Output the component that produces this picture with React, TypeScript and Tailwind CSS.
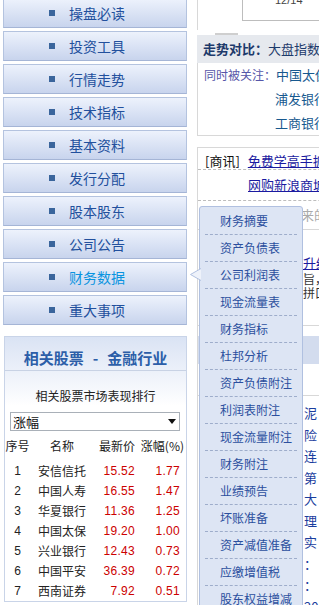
import React from "react";

const navItems = [
  "操盘必读",
  "投资工具",
  "行情走势",
  "技术指标",
  "基本资料",
  "发行分配",
  "股本股东",
  "公司公告",
  "财务数据",
  "重大事项",
];

const menuItems = [
  "财务摘要",
  "资产负债表",
  "公司利润表",
  "现金流量表",
  "财务指标",
  "杜邦分析",
  "资产负债附注",
  "利润表附注",
  "现金流量附注",
  "财务附注",
  "业绩预告",
  "坏账准备",
  "资产减值准备",
  "应缴增值税",
  "股东权益增减",
];

const stocks = [
  ["1", "安信信托", "15.52", "1.77"],
  ["2", "中国人寿", "16.55", "1.47"],
  ["3", "华夏银行", "11.36", "1.25"],
  ["4", "中国太保", "19.20", "1.00"],
  ["5", "兴业银行", "12.43", "0.73"],
  ["6", "中国平安", "36.39", "0.72"],
  ["7", "西南证券", "7.92", "0.51"],
];

const newsTail = ["泥", "险", "连", "第", "大", "理", "实", "：", "：", "201"];

const App = () => {
  return (
    <div className="relative w-[319px] h-[605px] overflow-hidden bg-white flex font-['Noto_Sans_CJK_SC',sans-serif]">
      {/* left column */}
      <div className="w-[184px] ml-[3px] shrink-0 flex flex-col -mt-[2px]">
        {/* nav buttons */}
        <div className="flex flex-col gap-[3px]">
          {navItems.map((label) => (
            <a
              key={label}
              href="#"
              className={`h-[30px] flex items-center border border-[#b4c3df] border-b-[#a5b5d6] bg-linear-to-b from-[#edf2fc] to-[#c8d4ed] pl-[45px] text-[14px] leading-none ${
                label === "财务数据" ? "text-[#0a94e0]" : "text-[#22509d]"
              }`}
            >
              <span className="w-[6px] h-[6px] bg-[#3a659c] mr-[14px]" />
              {label}
            </a>
          ))}
        </div>

        {/* related stocks */}
        <div className="mt-[11px] ml-[1px] w-[183px] border border-[#c9d4e8] bg-white">
          <div className="bg-linear-to-b from-[#dae3f4] to-white">
            <div className="h-[34px] border-b border-[#c8d2e4] pt-[11px] leading-[20px] text-center text-[15px] font-bold text-[#2c5ea8]">
              相关股票<span className="mx-[9px]">-</span>金融行业
            </div>
            <div className="pt-[15px] leading-[20px] text-center text-[12px] text-[#222]">
              相关股票市场表现排行
            </div>
          </div>
          <div className="mt-[6px] ml-[5px] w-[170px] h-[19px] border border-[#a9b0b8] flex items-center justify-between pl-[2px] pr-[3px] text-[13px] text-[#111]">
            <span>涨幅</span>
            <svg width="8" height="5" viewBox="0 0 8 5">
              <path d="M0 0h8L4 5z" fill="#111" />
            </svg>
          </div>

          <div className="mt-[5px] text-[12px] text-[#222]">
            <div className="h-[20px] flex items-center">
              <span className="w-[25px] text-center">序号</span>
              <span className="w-[64px] text-center">名称</span>
              <span className="w-[41px] text-right">最新价</span>
              <span className="w-[49px] text-right">涨幅(%)</span>
            </div>
            <div className="mt-[5px]">
              {stocks.map(([n, name, price, chg]) => (
                <div key={n} className="h-[20px] flex items-center">
                  <span className="w-[25px] text-center font-['Liberation_Sans',sans-serif]">{n}</span>
                  <span className="w-[64px] text-center">{name}</span>
                  <span className="w-[41px] text-right text-[#cc0000] font-['Liberation_Sans',sans-serif] tracking-[0.3px]">
                    {price}
                  </span>
                  <span className="w-[45px] text-right text-[#cc0000] font-['Liberation_Sans',sans-serif] tracking-[0.3px]">
                    {chg}
                  </span>
                </div>
              ))}
            </div>
          </div>
        </div>
      </div>

      {/* right column */}
      <div className="ml-[10px] w-[340px] shrink-0 text-[13px]">
        <div className="h-[30px] border-l border-[#d8d8d8] flex">
          <div className="ml-[44px] w-[200px] h-[29px] border-l border-b border-[#bdbdbd] pl-[32px] -mt-[8px] text-[11px] text-[#444] font-['Liberation_Sans',sans-serif]">
            12/14
          </div>
        </div>
        <div className="mt-[3px] ml-[18px] w-[23px] h-[2px] bg-[#cfcfcf]" />
        <div className="h-[28px] bg-[#e6e9ee] flex items-center pl-[6px] text-[#1d3a6b] whitespace-nowrap">
          <span className="font-bold">走势对比：</span>
          <span>大盘指数</span>
        </div>
        <div className="border-l border-b border-[#d8d8d8] pl-[6px] text-[12px] leading-[24px] h-[73px]">
          <div className="whitespace-nowrap">
            <span className="text-[#5656a8]">同时被关注：</span>
            <span className="text-[#17598f] text-[13px]">中国太保</span>
          </div>
          <div className="pl-[71px] text-[#17598f] text-[13px]">浦发银行</div>
          <div className="pl-[71px] text-[#17598f] text-[13px]">工商银行</div>
        </div>

        <div className="mt-[11px] border-l border-t border-[#d8d8d8]">
          <div className="h-[22px] pt-[4px] flex items-center border-b border-dashed border-[#bdbdbd] pl-[7px] whitespace-nowrap">
            <span className="text-[#111]">[商讯]</span>
            <a href="#" className="ml-[8px] text-[#1a1aa0] underline">
              免费学高手抓涨停
            </a>
          </div>
          <div className="h-[31px] flex items-center border-b border-dashed border-[#bdbdbd] pl-[50px] whitespace-nowrap">
            <a href="#" className="text-[#1a1aa0] underline">
              网购新浪商城
            </a>
          </div>
          <div className="h-[29px] flex items-center border-b border-[#d8d8d8] pl-[90px] text-[#aaa] whitespace-nowrap">
            送来的
          </div>
          <div className="pt-[23px] leading-[19px] pl-[105px] whitespace-nowrap">
            <a href="#" className="text-[#1a1aa0] underline">
              升级
            </a>
          </div>
          <div className="pl-[105px] text-[12px] leading-[14px] text-[#333] whitespace-nowrap">
            <div>旨，处</div>
            <div>拼口</div>
          </div>
          <div className="mt-[25px] border-t border-[#d8d8d8]" />
          <div className="mt-[10px] h-[28px] bg-[#d3dcee]" />
          <div className="mt-[31px] border-t border-[#d8d8d8]" />
          <div className="pt-[6px] pl-[106px] text-[#1a3d9e] leading-[21.5px] whitespace-nowrap">
            {newsTail.map((t, i) => (
              <div key={i}>{t}</div>
            ))}
          </div>
        </div>
      </div>

      {/* popup menu for 财务数据 */}
      <div className="absolute left-[199px] top-[206px] w-[104px] h-[420px] bg-[#dde5f4] border border-[#b0c0e0] rounded-t-[3px] pt-[1px]">
        {menuItems.map((item) => (
          <a
            key={item}
            href="#"
            className="mx-[5px] h-[27px] flex items-center border-b border-dashed border-[#9eadcb] pl-[15px] text-[12px] text-[#2b4f9e] whitespace-nowrap"
          >
            {item}
          </a>
        ))}
        <svg className="absolute -left-[10px] top-[61px]" width="11" height="13" viewBox="0 0 11 13">
          <path d="M11 0.5L0.5 6.5L11 12.5" fill="#eef2fa" stroke="#b0c0e0" />
        </svg>
      </div>
    </div>
  );
};

export default App;
